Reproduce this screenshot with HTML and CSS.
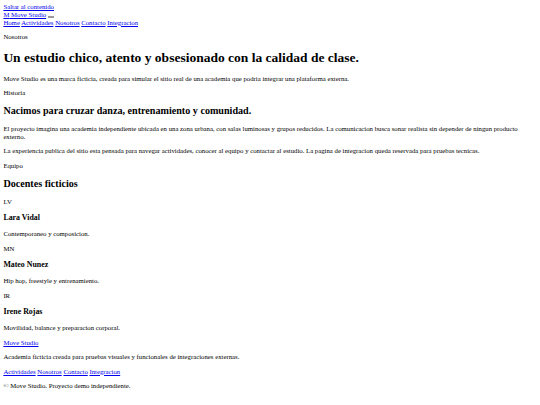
FILE: index.html
```html
<!DOCTYPE html>
<html lang="es">
<head>
<meta charset="utf-8">
<title>Nosotros | Move Studio</title>
<link rel="stylesheet" href="styles.css">
</head>
<body class="page">
<a class="skip-link" href="#contenido">Saltar al contenido</a>
<header class="site-header">
  <a class="brand" href="#"><span class="brand-mark">M</span> Move Studio</a>
  <button class="menu-toggle" type="button" aria-label="Abrir menu"><span></span><span></span><span></span></button>
  <nav class="site-nav">
    <a href="#">Home</a>
    <a href="#">Actividades</a>
    <a href="#">Nosotros</a>
    <a href="#">Contacto</a>
    <a href="#">Integracion</a>
  </nav>
</header>
<main id="contenido" class="content">
  <section class="hero">
    <p class="eyebrow">Nosotros</p>
    <h1>Un estudio chico, atento y obsesionado con la calidad de clase.</h1>
    <p>Move Studio es una marca ficticia, creada para simular el sitio real de una academia que podria integrar una plataforma externa.</p>
  </section>
  <section class="story">
    <p class="eyebrow">Historia</p>
    <h2>Nacimos para cruzar danza, entrenamiento y comunidad.</h2>
    <p>El proyecto imagina una academia independiente ubicada en una zona urbana, con salas luminosas y grupos reducidos. La comunicacion busca sonar realista sin depender de ningun producto externo.</p>
    <p>La experiencia publica del sitio esta pensada para navegar actividades, conocer al equipo y contactar al estudio. La pagina de integracion queda reservada para pruebas tecnicas.</p>
  </section>
  <section class="team">
    <p class="eyebrow">Equipo</p>
    <h2>Docentes ficticios</h2>
    <article class="teacher">
      <p class="avatar">LV</p>
      <h3>Lara Vidal</h3>
      <p>Contemporaneo y composicion.</p>
    </article>
    <article class="teacher">
      <p class="avatar">MN</p>
      <h3>Mateo Nunez</h3>
      <p>Hip hop, freestyle y entrenamiento.</p>
    </article>
    <article class="teacher">
      <p class="avatar">IR</p>
      <h3>Irene Rojas</h3>
      <p>Movilidad, balance y preparacion corporal.</p>
    </article>
  </section>
</main>
<footer class="site-footer">
  <p><a href="#">Move Studio</a></p>
  <p>Academia ficticia creada para pruebas visuales y funcionales de integraciones externas.</p>
  <p class="footer-links"><a href="#">Actividades</a> <a href="#">Nosotros</a> <a href="#">Contacto</a> <a href="#">Integracion</a></p>
  <p>&copy; Move Studio. Proyecto demo independiente.</p>
</footer>
</body>
</html>
```

FILE: styles.css
```css
.page {
  margin: 3.375px;
  font-family: "Liberation Serif", "Times New Roman", serif;
  font-size: 6.75px;
  line-height: 1.145;
  color: #000;
  background: #fff;
}

.page a {
  color: #0000ee;
}

.menu-toggle {
  display: inline-block;
  width: 6px;
  height: 2px;
  padding: 0;
  margin: 0;
  border: 0.5px solid #9a9a9a;
  border-radius: 0;
  background: #e6e6e6;
  vertical-align: baseline;
}
```
